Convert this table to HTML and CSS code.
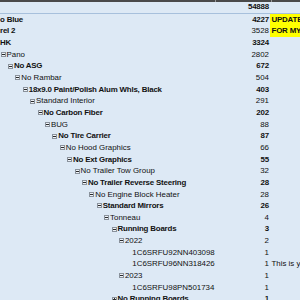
FILE: index.html
```html
<!DOCTYPE html>
<html>
<head>
<meta charset="utf-8">
<link rel="stylesheet" href="styles.css">
</head>
<body>
<div class="sheet">
  <div class="topbar"><div class="tb a"></div><div class="tb b"></div><div class="tb c"></div></div>
  <div class="row head"><div class="ca"></div><div class="cb b">54888</div><div class="cc"></div></div>
  <div class="row"><div class="ca b">o Blue</div><div class="cb b">4227</div><div class="cc hl b">UPDATE</div></div>
  <div class="row"><div class="ca b">rel 2</div><div class="cb">3528</div><div class="cc hl b">FOR MY</div></div>
  <div class="row"><div class="ca b">HK</div><div class="cb b">3324</div><div class="cc"></div></div>
  <div class="row"><div class="ca l0"><span class="tg"></span>Pano</div><div class="cb">2802</div><div class="cc"></div></div>
  <div class="row"><div class="ca l1 b"><span class="tg"></span>No ASG</div><div class="cb b">672</div><div class="cc"></div></div>
  <div class="row"><div class="ca l2"><span class="tg"></span>No Rambar</div><div class="cb">504</div><div class="cc"></div></div>
  <div class="row"><div class="ca l3 b"><span class="tg"></span>18x9.0 Paint/Polish Alum Whls, Black</div><div class="cb b">403</div><div class="cc"></div></div>
  <div class="row"><div class="ca l4"><span class="tg"></span>Standard Interior</div><div class="cb">291</div><div class="cc"></div></div>
  <div class="row"><div class="ca l5 b"><span class="tg"></span>No Carbon Fiber</div><div class="cb b">202</div><div class="cc"></div></div>
  <div class="row"><div class="ca l6"><span class="tg"></span>BUG</div><div class="cb">88</div><div class="cc"></div></div>
  <div class="row"><div class="ca l7 b"><span class="tg"></span>No Tire Carrier</div><div class="cb b">87</div><div class="cc"></div></div>
  <div class="row"><div class="ca l8"><span class="tg"></span>No Hood Graphics</div><div class="cb">66</div><div class="cc"></div></div>
  <div class="row"><div class="ca l9 b"><span class="tg"></span>No Ext Graphics</div><div class="cb b">55</div><div class="cc"></div></div>
  <div class="row"><div class="ca l10"><span class="tg"></span>No Trailer Tow Group</div><div class="cb">32</div><div class="cc"></div></div>
  <div class="row"><div class="ca l11 b"><span class="tg"></span>No Trailer Reverse Steering</div><div class="cb b">28</div><div class="cc"></div></div>
  <div class="row"><div class="ca l12"><span class="tg"></span>No Engine Block Heater</div><div class="cb">28</div><div class="cc"></div></div>
  <div class="row"><div class="ca l13 b"><span class="tg"></span>Standard Mirrors</div><div class="cb b">26</div><div class="cc"></div></div>
  <div class="row"><div class="ca l14"><span class="tg"></span>Tonneau</div><div class="cb">4</div><div class="cc"></div></div>
  <div class="row"><div class="ca l15 b"><span class="tg"></span>Running Boards</div><div class="cb b">3</div><div class="cc"></div></div>
  <div class="row"><div class="ca l16"><span class="tg"></span>2022</div><div class="cb">2</div><div class="cc"></div></div>
  <div class="row"><div class="ca l17"><span class="tg none"></span>1C6SRFU92NN403098</div><div class="cb">1</div><div class="cc"></div></div>
  <div class="row"><div class="ca l17"><span class="tg none"></span>1C6SRFU96NN318426</div><div class="cb">1</div><div class="cc">This is your</div></div>
  <div class="row"><div class="ca l16"><span class="tg"></span>2023</div><div class="cb">1</div><div class="cc"></div></div>
  <div class="row"><div class="ca l17"><span class="tg none"></span>1C6SRFU98PN501734</div><div class="cb">1</div><div class="cc"></div></div>
  <div class="row"><div class="ca l15 b"><span class="tg plus"></span>No Running Boards</div><div class="cb b">1</div><div class="cc"></div></div>
</div>
</body>
</html>
```
FILE: styles.css
```css
html, body {
  margin: 0;
  padding: 0;
}
body {
  width: 300px;
  height: 300px;
  overflow: hidden;
  background: #dde9f5;
  font-family: "Liberation Sans", Arial, sans-serif;
  font-size: 7.9px;
  color: #111;
}
.sheet {
  width: 300px;
}
.topbar {
  display: grid;
  grid-template-columns: 215px 55px 30px;
  height: 2px;
  background: #9a9a9a;
  column-gap: 1px;
}
.tb {
  background: #4a4a4a;
}
.row {
  display: grid;
  grid-template-columns: 215px 55px 30px;
  height: 11.667px;
  line-height: 11.667px;
  white-space: nowrap;
}
.row.head {
  box-sizing: border-box;
  border-bottom: 1px solid #a7c0dc;
  line-height: 10.667px;
}
.ca, .cb, .cc {
  overflow: hidden;
}
.ca {
  display: flex;
  align-items: center;
  --l: 0;
}
.cb {
  text-align: right;
  padding-right: 1px;
}
.cc {
  padding-left: 1.5px;
}
.hl {
  background: #ffff00;
}
.b {
  font-weight: bold;
  letter-spacing: -0.18px;
}
.l0, .l1, .l2, .l3, .l4, .l5, .l6, .l7, .l8, .l9,
.l10, .l11, .l12, .l13, .l14, .l15, .l16, .l17 {
  padding-left: calc(0.5px + var(--l) * 7.4px);
}
.l1 { --l: 1; }
.l2 { --l: 2; }
.l3 { --l: 3; }
.l4 { --l: 4; }
.l5 { --l: 5; }
.l6 { --l: 6; }
.l7 { --l: 7; }
.l8 { --l: 8; }
.l9 { --l: 9; }
.l10 { --l: 10; }
.l11 { --l: 11; }
.l12 { --l: 12; }
.l13 { --l: 13; }
.l14 { --l: 14; }
.l15 { --l: 15; }
.l16 { --l: 16; }
.l17 { --l: 17; }
.tg {
  position: relative;
  flex: none;
  box-sizing: border-box;
  width: 5px;
  height: 5px;
  margin-right: 1px;
  border: 1px solid #8a929c;
  background: #eef3f9;
}
.tg::after {
  content: "";
  position: absolute;
  left: 0;
  top: 1px;
  width: 3px;
  height: 1px;
  background: #2a2a2a;
}
.tg.plus::before {
  content: "";
  position: absolute;
  left: 1px;
  top: 0;
  width: 1px;
  height: 3px;
  background: #2a2a2a;
}
.tg.none {
  visibility: hidden;
}
```
